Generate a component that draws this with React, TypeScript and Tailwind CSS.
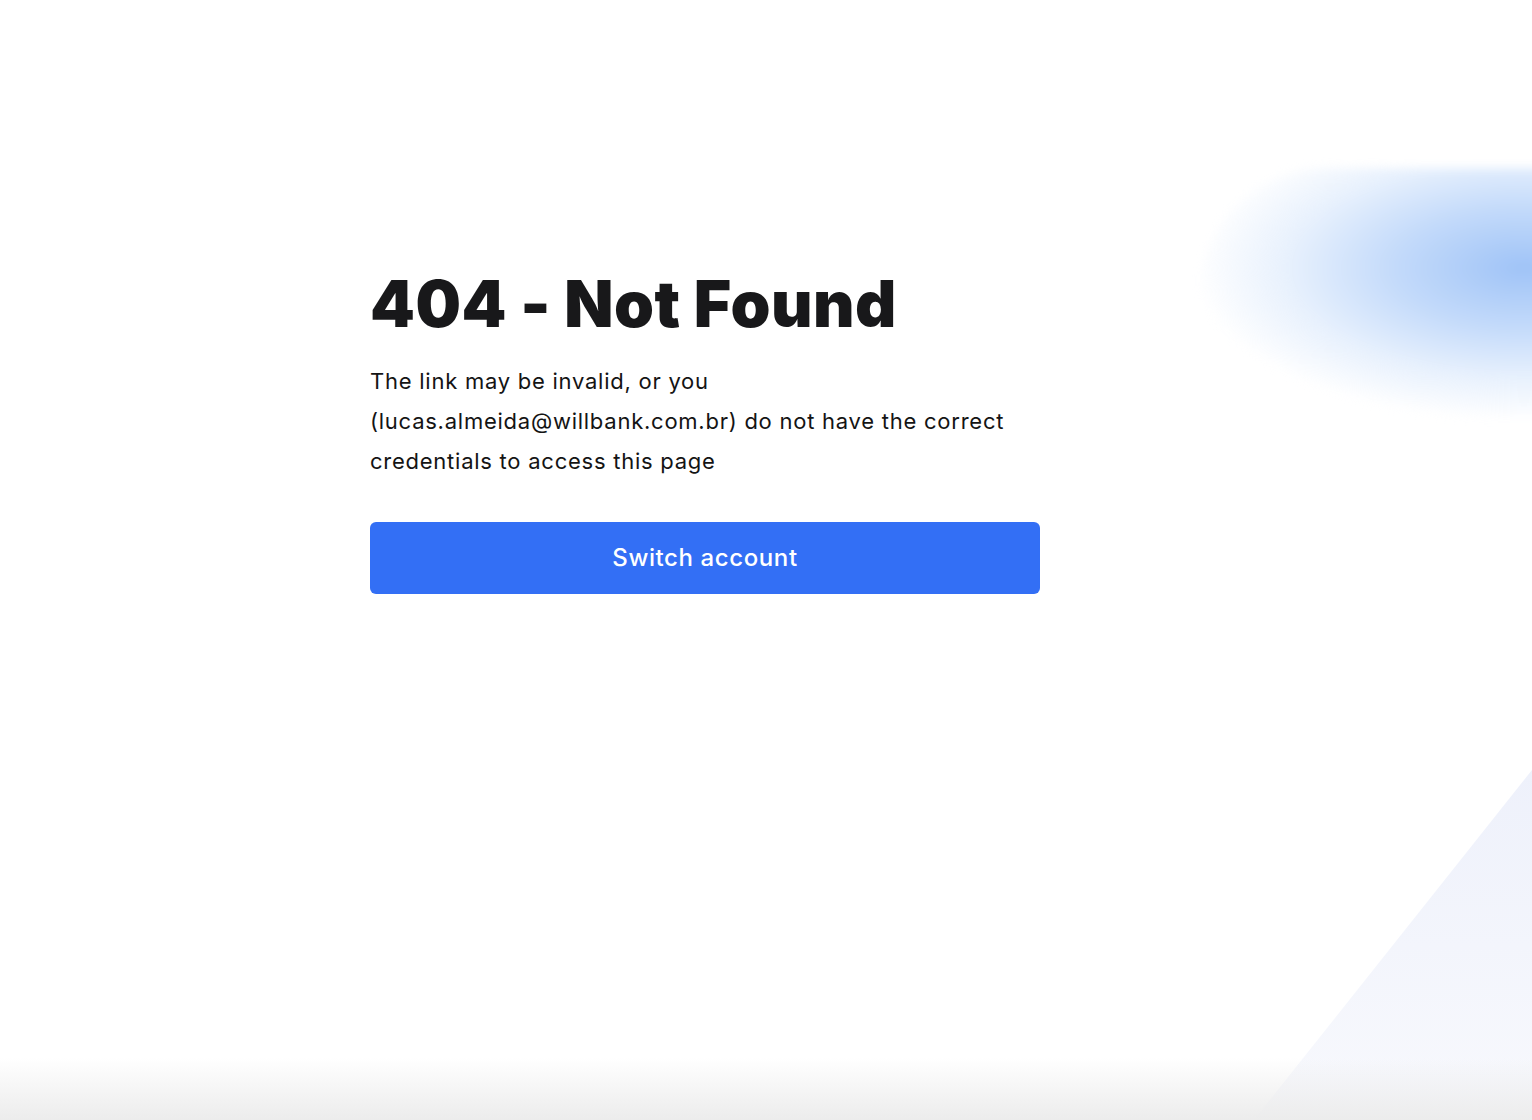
export default function App() {
  return (
    <div className="relative h-[1120px] w-full overflow-hidden bg-white font-['Inter',sans-serif]">
      {/* blurred blue glow, top right */}
      <div className="pointer-events-none absolute left-[1200px] top-[168px] h-[250px] w-[540px] rounded-full bg-[radial-gradient(ellipse_at_60%_40%,#9fc3f7_0%,#c3dafa_28%,#e8f1fd_52%,rgba(255,255,255,0)_72%)] blur-[5px]" />
      {/* pale triangle, bottom right */}
      <div className="pointer-events-none absolute bottom-0 right-0 h-[350px] w-[278px] bg-gradient-to-b from-[#eef1fb] to-[#f8f9fd] [clip-path:polygon(100%_0,100%_100%,0_100%)]" />
      {/* soft grey fade along the bottom */}
      <div className="pointer-events-none absolute bottom-0 left-0 h-[62px] w-full bg-gradient-to-b from-[rgba(238,238,238,0)] to-[#ececec]" />

      <main className="relative pl-[370px] pt-[264px]">
        <div className="w-[670px]">
          <h1 className="text-[64px] font-black leading-[80px] tracking-[0.5px] text-[#18181a]">
            404 - Not Found
          </h1>
          <p className="mt-[17px] w-[660px] text-[22px] leading-[40px] tracking-[0.75px] text-[#141414]">
            The link may be invalid, or you
            <br />
            (lucas.almeida@willbank.com.br) do not have the correct credentials to access this page
          </p>
          <button
            type="button"
            className="mt-[41px] flex h-[72px] w-full items-center justify-center rounded-[6px] bg-[#336ff5] text-[24px] font-medium tracking-[0.6px] text-white"
          >
            Switch account
          </button>
        </div>
      </main>
    </div>
  );
}
